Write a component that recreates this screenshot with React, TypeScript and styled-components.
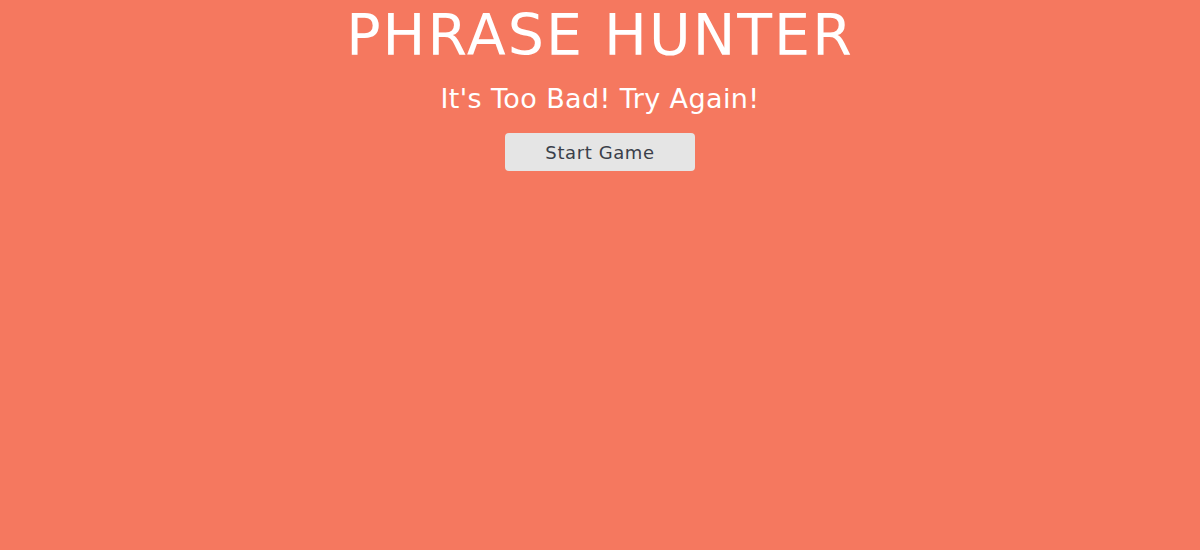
import React from "react";
import styled, { createGlobalStyle } from "styled-components";

const Global = createGlobalStyle`
  html, body { margin: 0; padding: 0; height: 100%; }
  body { background: #f5785f; font-family: "DejaVu Sans", sans-serif; }
  #root { min-height: 100%; }
`;

const Overlay = styled.div`
  box-sizing: border-box;
  height: 550px;
  background: #f5785f;
  display: flex;
  flex-direction: column;
  align-items: center;
`;

const Title = styled.h2`
  margin: 0;
  padding-top: 2px;
  font-family: "DejaVu Sans", sans-serif;
  font-weight: 400;
  font-size: 57px;
  line-height: 66px;
  color: #fff;
  letter-spacing: 2px;
`;

const Message = styled.h1`
  margin: 15px 0 0;
  font-family: "DejaVu Sans", sans-serif;
  font-weight: 400;
  font-size: 27px;
  line-height: 32px;
  color: #fff;
  letter-spacing: 0.4px;
`;

const Button = styled.button`
  margin-top: 18px;
  width: 190px;
  height: 38px;
  border: none;
  border-radius: 4px;
  background: #e5e5e5;
  color: #3a3f4a;
  font-family: "DejaVu Sans", sans-serif;
  font-size: 18px;
  letter-spacing: 0.6px;
  cursor: pointer;
`;

export default function App() {
  return (
    <>
      <Global />
      <Overlay>
        <Title>PHRASE HUNTER</Title>
        <Message>It's Too Bad! Try Again!</Message>
        <Button>Start Game</Button>
      </Overlay>
    </>
  );
}
